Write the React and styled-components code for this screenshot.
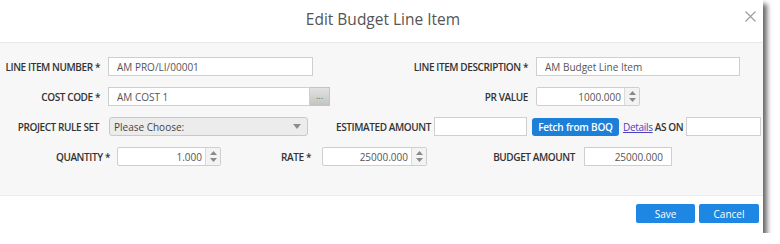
import React from "react";
import styled, { createGlobalStyle } from "styled-components";

const Global = createGlobalStyle`
  body {
    margin: 0;
    background: #fff;
    font-family: "Open Sans", "Liberation Sans", sans-serif;
  }
`;

export default function App() {
  return (
    <>
      <Global />
      <Dialog>
        <Header>
          <Title>Edit Budget Line Item</Title>
          <Close>
            <svg width="11" height="11" viewBox="0 0 11 11">
              <path d="M0.5 0.5 L10.5 10.5 M10.5 0.5 L0.5 10.5" stroke="#9c9c9c" strokeWidth="1.1" />
            </svg>
          </Close>
        </Header>
        <Body>
          <Row>
            <Label w={100}>LINE ITEM NUMBER *</Label>
            <Input w={205} defaultValue="AM PRO/LI/00001" />
            <Label w={215}>LINE ITEM DESCRIPTION *</Label>
            <Input w={204} defaultValue="AM Budget Line Item" />
          </Row>
          <Row>
            <Label w={100}>COST CODE *</Label>
            <Group>
              <Input w={202} defaultValue="AM COST 1" />
              <DotsButton>...</DotsButton>
            </Group>
            <Label w={198}>PR VALUE</Label>
            <Spinner w={104} value="1000.000" />
          </Row>
          <Row>
            <Label w={99} gap={10}>PROJECT RULE SET</Label>
            <Select>
              <span>Please Choose:</span>
              <Caret />
            </Select>
            <Label gap={3}>ESTIMATED AMOUNT</Label>
            <Input w={93} />
            <FetchButton>Fetch from BOQ</FetchButton>
            <Link href="#">Details</Link>
            <Label gap={3}>AS ON</Label>
            <Input w={75} />
          </Row>
          <Row>
            <Label w={110} gap={7}>QUANTITY *</Label>
            <Spinner w={104} value="1.000" />
            <Label w={90} gap={11}>RATE *</Label>
            <Spinner w={105} value="25000.000" />
            <Label w={148} gap={9}>BUDGET AMOUNT</Label>
            <Input w={88} align="right" defaultValue="25000.000" />
          </Row>
        </Body>
        <Footer>
          <PrimaryButton w={59}>Save</PrimaryButton>
          <PrimaryButton w={60}>Cancel</PrimaryButton>
        </Footer>
      </Dialog>
    </>
  );
}

function Spinner({ w, value }) {
  return (
    <SpinBox w={w}>
      <SpinInput defaultValue={value} />
      <SpinArrows>
        <svg width="7" height="4" viewBox="0 0 7 4">
          <path d="M0 4 L3.5 0 L7 4 Z" fill="#8a8a8a" />
        </svg>
        <svg width="7" height="4" viewBox="0 0 7 4">
          <path d="M0 0 L3.5 4 L7 0 Z" fill="#8a8a8a" />
        </svg>
      </SpinArrows>
    </SpinBox>
  );
}

function Caret() {
  return (
    <svg width="8" height="5" viewBox="0 0 8 5">
      <path d="M0 0 L4 5 L8 0 Z" fill="#8c8c8c" />
    </svg>
  );
}

const Dialog = styled.div`
  width: 763px;
  height: 233px;
  background: #fff;
  box-shadow: 4px 4px 5px rgba(0, 0, 0, 0.6);
  display: flex;
  flex-direction: column;
`;

const Header = styled.div`
  height: 43px;
  display: flex;
  align-items: center;
  justify-content: center;
  position: relative;
  border-bottom: 1px solid #e8e8e8;
  box-sizing: border-box;
`;

const Title = styled.div`
  font-size: 15.5px;
  color: #555;
  margin-top: -4px;
  margin-left: 3px;
`;

const Close = styled.div`
  position: absolute;
  right: 7px;
  top: 11px;
  width: 11px;
  height: 11px;
  display: flex;
`;

const Body = styled.div`
  background: #f7f7f7;
  height: 153px;
  padding-top: 14px;
  box-sizing: border-box;
  display: flex;
  flex-direction: column;
  gap: 11px;
  border-bottom: 1px solid #ececec;
`;

const Row = styled.div`
  display: flex;
  align-items: center;
  height: 19px;
`;

const Label = styled.label`
  width: ${(p) => (p.w ? `${p.w}px` : "auto")};
  flex: none;
  text-align: right;
  margin-right: ${(p) => p.gap ?? 8}px;
  font-size: 10px;
  font-weight: 600;
  color: #333;
  letter-spacing: -0.4px;
  white-space: nowrap;
`;

const Input = styled.input`
  width: ${(p) => p.w}px;
  height: 19px;
  box-sizing: border-box;
  flex: none;
  border: 1px solid #cfcfcf;
  background: #fff;
  font-family: inherit;
  font-size: 10px;
  color: #555;
  padding: 0 8px;
  text-align: ${(p) => p.align || "left"};
  outline: none;
`;

const Group = styled.div`
  display: flex;
  flex: none;
`;

const DotsButton = styled.div`
  width: 20px;
  height: 19px;
  box-sizing: border-box;
  border: 1px solid #c4c4c4;
  border-left: none;
  background: linear-gradient(#e2e2e2, #c4c4c4);
  color: #666;
  font-size: 9px;
  line-height: 15px;
  text-align: center;
`;

const SpinBox = styled.div`
  width: ${(p) => p.w}px;
  height: 19px;
  flex: none;
  display: flex;
  box-sizing: border-box;
  border: 1px solid #cfcfcf;
  border-radius: 2px;
  background: #fff;
`;

const SpinInput = styled.input`
  flex: 1;
  min-width: 0;
  border: none;
  outline: none;
  background: transparent;
  font-family: inherit;
  font-size: 10px;
  color: #555;
  text-align: right;
  padding: 0 3px;
`;

const SpinArrows = styled.div`
  width: 14px;
  border-left: 1px solid #dadada;
  background: #f3f3f3;
  display: flex;
  flex-direction: column;
  align-items: center;
  justify-content: center;
  gap: 3px;
`;

const Select = styled.div`
  width: 199px;
  height: 19px;
  flex: none;
  box-sizing: border-box;
  border: 1px solid #c9c9c9;
  border-radius: 3px;
  background: #ececec;
  display: flex;
  align-items: center;
  justify-content: space-between;
  padding: 0 6px 0 4px;
  font-size: 10px;
  color: #444;
  margin-right: 28px;
`;

const FetchButton = styled.button`
  flex: none;
  width: 87px;
  height: 18px;
  margin-left: 5px;
  margin-right: 4px;
  border: none;
  border-radius: 3px;
  background: #1c7fd8;
  color: #fff;
  font-family: inherit;
  font-size: 10px;
  font-weight: 600;
  padding: 0;
  letter-spacing: -0.2px;
`;

const Link = styled.a`
  font-size: 10px;
  color: #4b3fc4;
  text-decoration: underline;
  margin-right: 2px;
  letter-spacing: -0.3px;
`;

const Footer = styled.div`
  flex: 1;
  display: flex;
  justify-content: flex-end;
  align-items: flex-start;
  padding: 8px 4px 0 0;
  gap: 4px;
`;

const PrimaryButton = styled.button`
  width: ${(p) => p.w}px;
  height: 19px;
  border: none;
  border-radius: 2px;
  background: #1e87e4;
  color: #fff;
  font-family: inherit;
  font-size: 10px;
  padding: 0;
`;
